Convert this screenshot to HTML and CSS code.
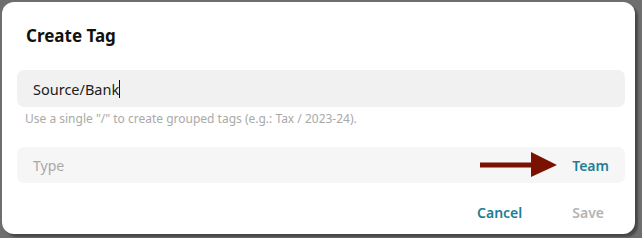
FILE: index.html
```html
<!DOCTYPE html>
<html>
<head>
<meta charset="utf-8">
<link rel="stylesheet" href="styles.css">
</head>
<body>
<div class="dialog">
  <h2 class="title">Create Tag</h2>
  <div class="field filled"><span class="value">Source/Bank</span><span class="caret"></span></div>
  <p class="hint">Use a single "/" to create grouped tags (e.g.: Tax / 2023-24).</p>
  <div class="field select">
    <span class="placeholder">Type</span>
    <span class="right">
      <svg class="arrow" width="78" height="26" viewBox="0 0 78 26"><rect x="0" y="10.5" width="54" height="5" fill="#7b1100"/><polygon points="51,0 77,13 51,25" fill="#7b1100"/></svg>
      <span class="team">Team</span>
    </span>
  </div>
  <div class="actions">
    <button class="btn cancel">Cancel</button>
    <button class="btn save">Save</button>
  </div>
</div>
</body>
</html>
```
FILE: styles.css
```css
html, body { margin: 0; padding: 0; }
body {
  width: 642px; height: 238px;
  background: #6e6e6e;
  font-family: "Noto Sans", "Open Sans", sans-serif;
  padding: 2px 0 0 2px;
  box-sizing: border-box;
  overflow: hidden;
}
.dialog {
  width: 633px; height: 232px;
  background: #fff;
  border-radius: 12px;
  box-sizing: border-box;
  padding: 22px 10px 0 15px;
  box-shadow: 3px 3px 2px rgba(0,0,0,0.35);
  display: flex; flex-direction: column;
}
.title {
  margin: 0 0 0 9px;
  font-size: 17px; line-height: 24px; font-weight: 700;
  color: #111;
}
.field {
  display: flex; align-items: center;
  border-radius: 7px;
  padding: 0 16px;
}
.filled {
  margin-top: 22px;
  height: 37px;
  background: #f1f1f1;
  font-size: 14.5px; color: #1c1c1c;
}
.caret { display: inline-block; width: 1px; height: 18px; background: #111; margin-left: 0; }
.hint {
  margin: 3px 0 0 8px;
  font-size: 12px; line-height: 17px; color: #a9a9a9;
}
.select {
  margin-top: 20px;
  height: 36px;
  background: #f6f6f6;
  justify-content: space-between;
  font-size: 14px;
  padding-right: 16px;
}
.placeholder { color: #a8a8a8; }
.right { display: flex; align-items: center; }
.arrow { display: block; margin-right: 14px; }
.team { color: #1c8095; font-weight: 600; }
.actions {
  display: flex; justify-content: flex-end;
  margin-top: 20px; padding-right: 21px;
  gap: 50px;
}
.btn {
  border: 0; background: none; padding: 0;
  font-family: inherit; font-size: 14px; font-weight: 600;
}
.cancel { color: #1c8095; }
.save { color: #b4b4b4; }
```
